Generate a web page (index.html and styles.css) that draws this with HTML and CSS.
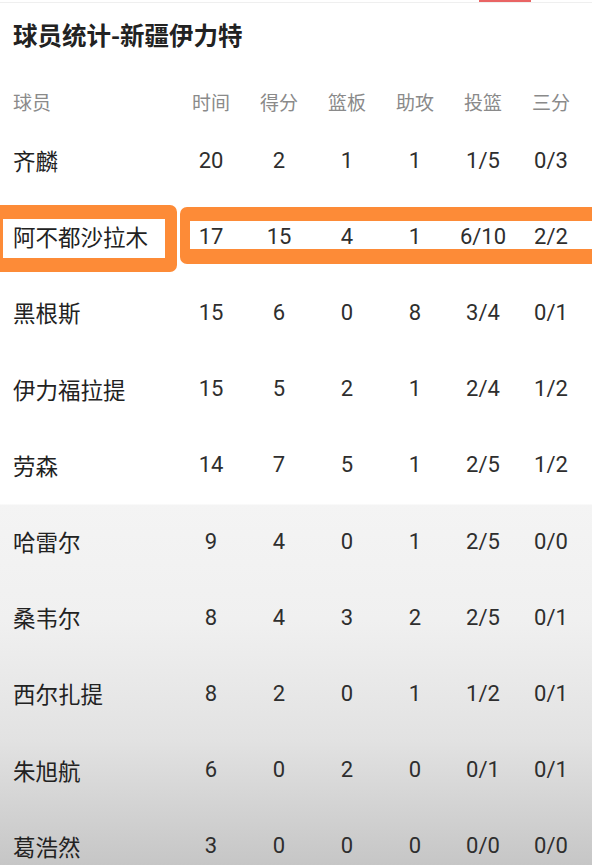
FILE: index.html
```html
<!DOCTYPE html>
<html lang="zh-CN">
<head>
    <meta charset="UTF-8">
    <meta name="viewport" content="width=device-width, initial-scale=1.0">
    <title>球员统计</title>
    <link rel="stylesheet" href="styles.css">
</head>
<body>
    <div class="topline"><span class="tab-mark"></span></div>

    <h2 class="title">球员统计-新疆伊力特</h2>

    <div class="stats">
        <div class="row head">
            <div class="name">球员</div>
            <div>时间</div>
            <div>得分</div>
            <div>篮板</div>
            <div>助攻</div>
            <div>投篮</div>
            <div>三分</div>
        </div>

        <div class="row">
            <div class="name">齐麟</div>
            <div>20</div><div>2</div><div>1</div><div>1</div><div>1/5</div><div>0/3</div>
        </div>

        <!-- 高亮的这一行 -->
        <div class="row marked">
            <span class="mark-name"></span>
            <span class="mark-stats"></span>
            <div class="name">阿不都沙拉木</div>
            <div>17</div><div>15</div><div>4</div><div>1</div><div>6/10</div><div>2/2</div>
        </div>

        <div class="row">
            <div class="name">黑根斯</div>
            <div>15</div><div>6</div><div>0</div><div>8</div><div>3/4</div><div>0/1</div>
        </div>
        <div class="row">
            <div class="name">伊力福拉提</div>
            <div>15</div><div>5</div><div>2</div><div>1</div><div>2/4</div><div>1/2</div>
        </div>
        <div class="row">
            <div class="name">劳森</div>
            <div>14</div><div>7</div><div>5</div><div>1</div><div>2/5</div><div>1/2</div>
        </div>
        <div class="row">
            <div class="name">哈雷尔</div>
            <div>9</div><div>4</div><div>0</div><div>1</div><div>2/5</div><div>0/0</div>
        </div>
        <div class="row">
            <div class="name">桑韦尔</div>
            <div>8</div><div>4</div><div>3</div><div>2</div><div>2/5</div><div>0/1</div>
        </div>
        <div class="row">
            <div class="name">西尔扎提</div>
            <div>8</div><div>2</div><div>0</div><div>1</div><div>1/2</div><div>0/1</div>
        </div>
        <div class="row">
            <div class="name">朱旭航</div>
            <div>6</div><div>0</div><div>2</div><div>0</div><div>0/1</div><div>0/1</div>
        </div>
        <div class="row">
            <div class="name">葛浩然</div>
            <div>3</div><div>0</div><div>0</div><div>0</div><div>0/0</div><div>0/0</div>
        </div>
    </div>
</body>
</html>
```

FILE: styles.css
```css
html, body {
    margin: 0;
    padding: 0;
}

body {
    width: 592px;
    height: 865px;
    overflow: hidden;
    font-family: Roboto, "Noto Sans CJK SC", sans-serif;
    color: #2a2a2a;
    background: linear-gradient(to bottom,
        #fff 0, #fff 504px,
        #f4f4f4 505px, #f0f0f0 620px,
        #e2e2e2 740px, #c6c6c6 865px);
}

.topline {
    position: relative;
    height: 2px;
    border-bottom: 1px solid #efefef;
}

.tab-mark {
    position: absolute;
    left: 479px;
    top: 0;
    width: 52px;
    height: 2px;
    background-color: #e96464;
}

.title {
    margin: 0;
    padding: 16px 0 30px 13px;
    height: 31px;
    line-height: 31px;
    font-size: 24.5px;
    font-weight: bold;
    font-family: "Noto Sans CJK SC", sans-serif;
    color: #222;
}

.row {
    position: relative;
    display: grid;
    grid-template-columns: 177px repeat(6, 68px);
    align-items: center;
    height: 76.2px;
    font-size: 22px;
    text-align: center;
    color: #2e2e2e;
}

.row .name {
    padding-left: 13px;
    text-align: left;
    font-size: 22.5px;
    font-family: "Noto Sans CJK SC", sans-serif;
    color: #222;
}

.row.head {
    height: 42px;
    font-size: 19px;
    color: #8a8a8a;
    font-family: "Noto Sans CJK SC", sans-serif;
}

.row.head .name {
    font-size: 19px;
    color: #8a8a8a;
}

.row > div {
    position: relative;
}

.mark-name,
.mark-stats {
    position: absolute;
    box-sizing: border-box;
    border: solid #fd8b37;
}

.mark-name {
    left: 0;
    top: 7px;
    width: 177px;
    height: 67px;
    border-width: 14px 12px 14px 3px;
    border-radius: 0 7px 7px 0;
}

.mark-stats {
    left: 180px;
    top: 9px;
    width: 420px;
    height: 57px;
    border-width: 14px 4px 15px 10px;
    border-radius: 7px 0 0 7px;
}
```
